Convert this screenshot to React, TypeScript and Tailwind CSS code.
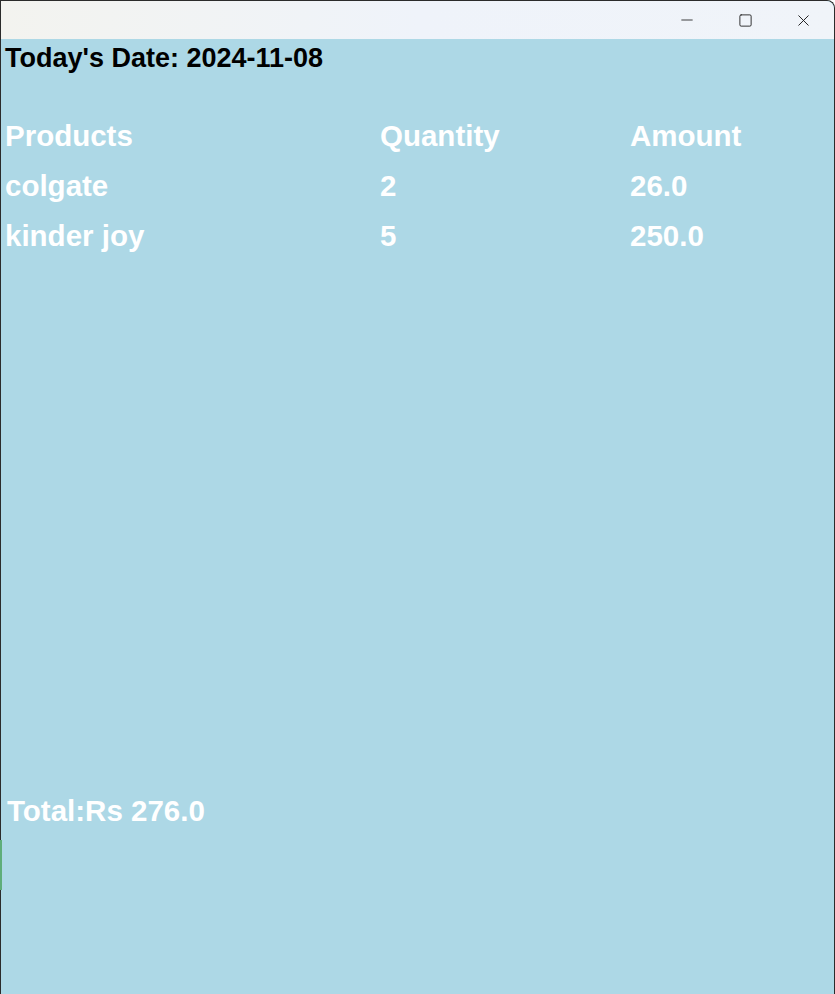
import { Minus, Square, X } from "lucide-react";

const rows = [
    { product: "Products", qty: "Quantity", amount: "Amount" },
    { product: "colgate", qty: "2", amount: "26.0" },
    { product: "kinder joy", qty: "5", amount: "250.0" },
];

const App = () => {
    return (
        <div className="w-[835px] h-[994px] flex flex-col rounded-tr-[8px] border border-[#2b2b2b] border-b-0 bg-[#add8e6] font-['Liberation_Sans',Arial,sans-serif]">
            <div className="h-[38px] shrink-0 flex justify-end items-center rounded-tr-[8px] bg-gradient-to-r from-[#f3f3ef] via-[#eff3fa] to-[#f0f4f9]">
                <div className="w-[58px] flex justify-center text-[#1a1a1a]">
                    <Minus size={18} strokeWidth={1.1} />
                </div>
                <div className="w-[58px] flex justify-center text-[#1a1a1a]">
                    <Square size={15} strokeWidth={1.4} />
                </div>
                <div className="w-[58px] flex justify-center text-[#1a1a1a] mr-[2px]">
                    <X size={19} strokeWidth={1.2} />
                </div>
            </div>

            <div className="flex-1 flex flex-col">
                <div className="px-[4px] pt-[2px] text-[27px] leading-[34px] font-bold text-black">
                    Today's Date: 2024-11-08
                </div>

                <div className="mt-[36px] flex flex-col text-white font-bold text-[29.5px]">
                    {rows.map((r) => (
                        <div key={r.product} className="grid grid-cols-[375px_250px_1fr] h-[50px] items-center pl-[4px]">
                            <span>{r.product}</span>
                            <span>{r.qty}</span>
                            <span>{r.amount}</span>
                        </div>
                    ))}
                </div>

                <div className="mt-[530px] pl-[6px] text-white font-bold text-[29.5px] leading-[40px]">
                    Total:Rs 276.0
                </div>
                <div className="mt-[9px] w-[2px] h-[50px] bg-[#5fae7a] -ml-[1px]" />
            </div>
        </div>
    );
};

export default App;
